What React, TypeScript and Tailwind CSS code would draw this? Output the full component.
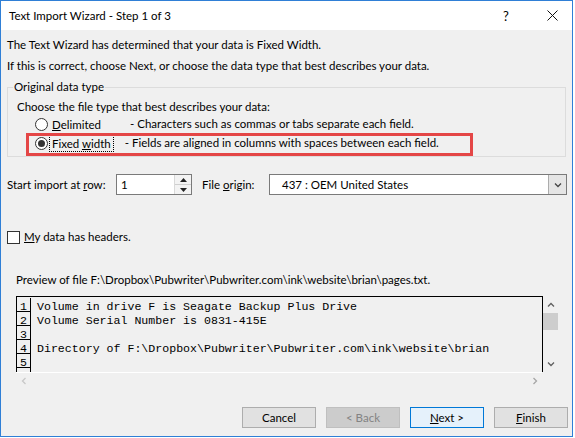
import React from "react";

const Chevron = ({ dir, color, size = 8 }: { dir: "up" | "down" | "left" | "right"; color: string; size?: number }) => {
  const paths: Record<string, string> = {
    up: "M1 5.5 L4 2.5 L7 5.5",
    down: "M1 2.5 L4 5.5 L7 2.5",
    left: "M5.5 1 L2.5 4 L5.5 7",
    right: "M2.5 1 L5.5 4 L2.5 7",
  };
  return (
    <svg width={size} height={size} viewBox="0 0 8 8">
      <path d={paths[dir]} fill="none" stroke={color} strokeWidth="1.3" />
    </svg>
  );
};

const Radio = ({ checked }: { checked?: boolean }) => (
  <div className="w-[13px] h-[13px] rounded-full border border-[#333333] bg-white flex items-center justify-center shrink-0">
    {checked && <div className="w-[7px] h-[7px] rounded-full bg-[#333333]" />}
  </div>
);

const previewLines = [
  "Volume in drive F is Seagate Backup Plus Drive",
  "Volume Serial Number is 0831-415E",
  "",
  "Directory of F:\\Dropbox\\Pubwriter\\Pubwriter.com\\ink\\website\\brian",
  "",
  "",
];

export default function App() {
  return (
    <div className="w-[575px] h-[438px] bg-white font-['Lato','Liberation_Sans',sans-serif] text-[11.5px] text-black">
      <div className="w-[573px] h-[437px] border border-[#2f7fd6] bg-[#f0f0f0] flex flex-col">
        {/* Title bar */}
        <div className="h-[29px] bg-white flex items-center pl-[8px] shrink-0">
          <span className="flex-1 leading-[16px]">Text Import Wizard - Step 1 of 3</span>
          <span className="w-[40px] text-center text-[13px] leading-[16px]">?</span>
          <span className="w-[40px] ml-[6px] flex items-center justify-center">
            <svg width="11" height="11" viewBox="0 0 11 11">
              <path d="M0.5 0.5 L10.5 10.5 M10.5 0.5 L0.5 10.5" stroke="#111" strokeWidth="1" />
            </svg>
          </span>
        </div>

        {/* Body */}
        <div className="px-[6px]">
          <div className="mt-[7px] leading-[16px]">The Text Wizard has determined that your data is Fixed Width.</div>
          <div className="mt-[5px] leading-[16px]">If this is correct, choose Next, or choose the data type that best describes your data.</div>

          <fieldset className="mt-[5px] border border-[#dcdcdc] pl-[5px] pb-[4px]">
            <legend className="px-[1px] leading-[16px]">Original data type</legend>
            <div className="pl-[4px] mt-[4px] leading-[16px]">Choose the file type that best describes your data:</div>
            <div className="h-[18px] flex items-center pl-[22px]">
              <Radio />
              <span className="ml-[1px] w-[81px] border border-transparent px-[2px] leading-[15px]">
                <span className="underline">D</span>elimited
              </span>
              <span className="leading-[16px]">- Characters such as commas or tabs separate each field.</span>
            </div>
            <div className="relative mt-[1px] h-[18px] flex items-center pl-[22px]">
              <Radio checked />
              <span className="ml-[1px] border border-dotted border-black px-[2px] leading-[15px]">
                Fixed <span className="underline">w</span>idth
              </span>
              <span className="ml-[11px] leading-[16px]">- Fields are aligned in columns with spaces between each field.</span>
              <div className="absolute left-[13px] top-[-1px] w-[447px] h-[23px] border-[3px] border-[#e44646]" />
            </div>
          </fieldset>

          {/* Start import row */}
          <div className="mt-[17px] h-[21px] flex items-center">
            <span className="w-[109px] shrink-0 leading-[16px]">
              Start import at <span className="underline">r</span>ow:
            </span>
            <div className="w-[76px] h-[21px] shrink-0 border border-[#7a7a7a] bg-white flex">
              <span className="flex-1 pl-[4px] leading-[19px]">1</span>
              <div className="w-[17px] flex flex-col border-l border-[#d9d9d9]">
                <div className="flex-1 flex items-center justify-center bg-[#f3f3f3] border-b border-[#cfcfcf]">
                  <svg width="7" height="4" viewBox="0 0 7 4"><path d="M0 4 L3.5 0 L7 4 Z" fill="#222" /></svg>
                </div>
                <div className="flex-1 flex items-center justify-center bg-[#f3f3f3]">
                  <svg width="7" height="4" viewBox="0 0 7 4"><path d="M0 0 L3.5 4 L7 0 Z" fill="#222" /></svg>
                </div>
              </div>
            </div>
            <span className="ml-[10px] w-[67px] shrink-0 leading-[16px]">
              File <span className="underline">o</span>rigin:
            </span>
            <div className="w-[298px] h-[21px] shrink-0 border border-[#7a7a7a] bg-white flex">
              <span className="flex-1 pl-[12px] leading-[19px]">437 : OEM United States</span>
              <div className="w-[18px] bg-[#e5e5e5] border-l border-[#acacac] flex items-center justify-center">
                <Chevron dir="down" color="#444" />
              </div>
            </div>
          </div>

          {/* Checkbox */}
          <div className="mt-[34px] h-[16px] flex items-center">
            <div className="w-[13px] h-[13px] border border-[#333333] bg-white shrink-0" />
            <span className="ml-[4px] leading-[16px]">
              <span className="underline">M</span>y data has headers.
            </span>
          </div>

          {/* Preview label */}
          <div className="mt-[27px] pl-[9px] leading-[16px]">
            Preview of file F:\Dropbox\Pubwriter\Pubwriter.com\ink\website\brian\pages.txt.
          </div>

          {/* Preview box */}
          <div className="mt-[8px] ml-[9px] w-[543px] h-[92px] flex flex-col">
            <div className="flex h-[76px]">
              <div className="w-[527px] pt-[1px] border-l border-t border-r border-black overflow-hidden bg-[#f0f0f0] font-['Liberation_Mono',monospace] text-[11.6px]">
                {previewLines.map((line, i) => (
                  <div key={i} className="flex h-[14px]">
                    <div className="w-[14px] h-[14px] border-r border-b border-black text-center leading-[17px] shrink-0">
                      {i < 5 ? i + 1 : ""}
                    </div>
                    <div className="pl-[6px] leading-[17px] whitespace-pre">{line}</div>
                  </div>
                ))}
              </div>
              <div className="w-[16px] flex flex-col">
                <div className="h-[17px] flex items-center justify-center">
                  <Chevron dir="up" color="#606060" />
                </div>
                <div className="h-[17px] bg-[#cdcdcd] mr-[1px]" />
                <div className="flex-1" />
                <div className="h-[17px] flex items-center justify-center">
                  <Chevron dir="down" color="#606060" />
                </div>
              </div>
            </div>
            <div className="w-[526px] h-[16px] flex justify-between border-t border-white">
              <div className="w-[15px] flex items-center justify-center">
                <Chevron dir="left" color="#c8c8c8" />
              </div>
              <div className="w-[15px] flex items-center justify-center">
                <Chevron dir="right" color="#a6a6a6" />
              </div>
            </div>
          </div>
        </div>

        {/* Buttons */}
        <div className="mt-auto flex justify-end gap-[10px] pr-[4px] pb-[8px]">
          <button className="w-[74px] h-[21px] bg-[#e1e1e1] border border-[#adadad] leading-[19px]">Cancel</button>
          <button className="w-[74px] h-[21px] bg-[#cccccc] border border-[#bfbfbf] text-[#838383] leading-[19px]">&lt; Back</button>
          <button className="w-[74px] h-[21px] bg-[#e5f1fb] border border-[#0078d7] leading-[19px]">
            <span className="underline">N</span>ext &gt;
          </button>
          <button className="w-[74px] h-[21px] bg-[#e1e1e1] border border-[#adadad] leading-[19px]">
            <span className="underline">F</span>inish
          </button>
        </div>
      </div>
    </div>
  );
}
